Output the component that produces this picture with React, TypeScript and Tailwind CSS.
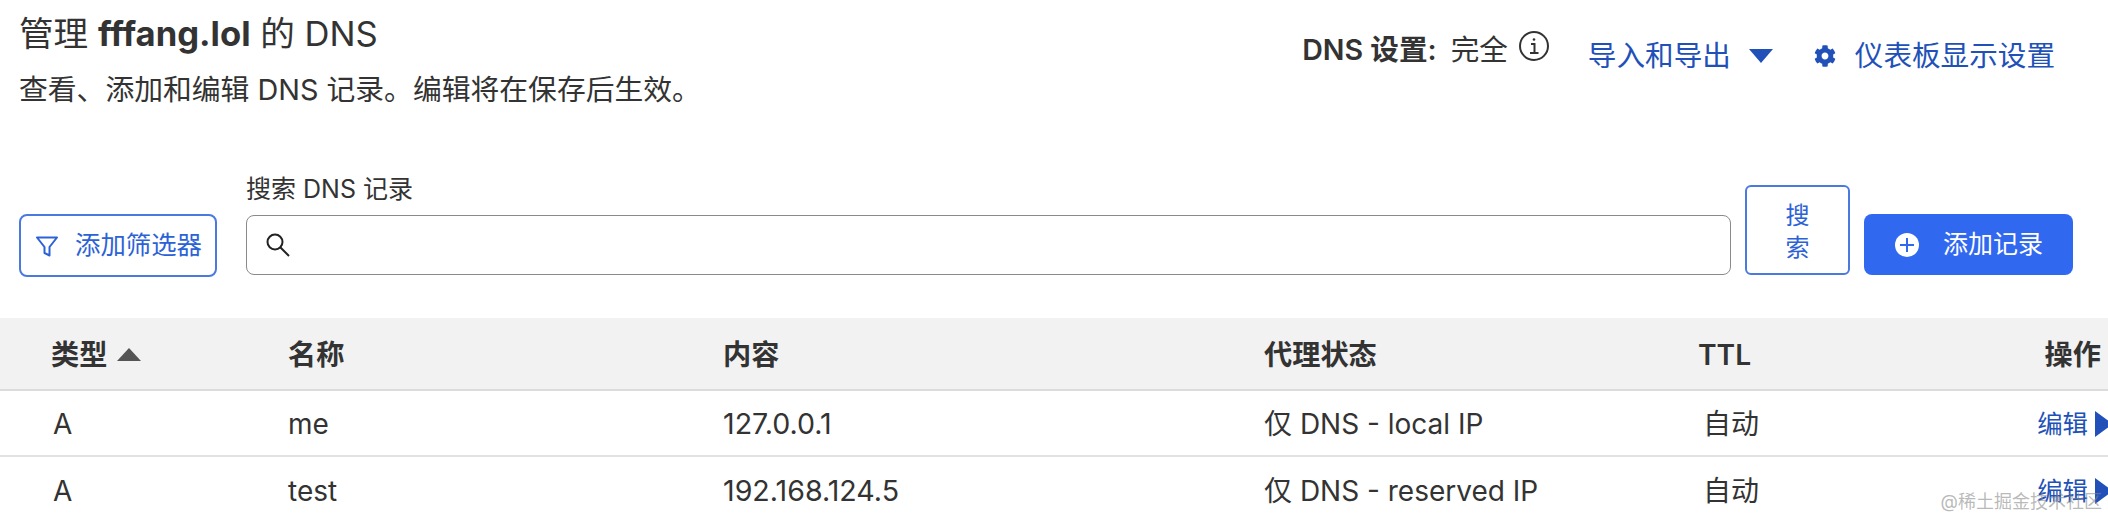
import { FaCog } from "react-icons/fa";

const font = { fontFamily: '"Inter", "Noto Sans CJK SC", sans-serif' };

function Row({ type, name, content, proxy, last }: { type: string; name: string; content: string; proxy: string; last?: boolean }) {
  return (
    <div className={`grid grid-cols-[288px_434px_542px_434px_1fr] items-center h-[66px] pt-[2px] text-[28px] text-[#333333] ${last ? "" : "border-b-2 border-[#e2e2e2]"}`}>
      <div className="pl-[53px]">{type}</div>
      <div>{name}</div>
      <div className="pl-px text-[28.6px]">{content}</div>
      <div>{proxy}</div>
      <div className="flex items-center justify-between pl-[5px]">
        <span>自动</span>
        <span className="flex items-center text-[25.4px] text-[#2151b8] -mr-[5px]">
          编辑
          <svg className="ml-[7px]" width="18" height="26" viewBox="0 0 18 26"><path d="M0 0L18 13L0 26Z" fill="#2151b8" /></svg>
        </span>
      </div>
    </div>
  );
}

export default function App() {
  return (
    <div className="relative w-[2108px] h-[520px] overflow-hidden bg-white text-[#333333]" style={font}>
      <div className="flex justify-between h-[185px] pl-[19px] pr-[53px]">
        <div className="pt-[12px]">
          <h1 className="text-[34.6px] leading-[42px] font-normal">管理 <b className="font-bold">fffang.lol</b> 的 DNS</h1>
          <p className="mt-[17px] text-[28.8px] leading-[38px]">查看、添加和编辑 DNS 记录。编辑将在保存后生效。</p>
        </div>
        <div className="flex pt-[32px] h-fit">
          <div className="flex items-start text-[28.6px] leading-[36px]">
            <b className="font-semibold">DNS 设置:</b>
            <span className="ml-[14px]">完全</span>
            <svg className="ml-[11px] -mt-[1px]" width="30" height="30" viewBox="0 0 30 30" fill="none" stroke="#333333" strokeWidth="2">
              <circle cx="15" cy="15" r="14" />
              <path d="M12 13h3.5v9M11 22h8.5" />
              <circle cx="15" cy="8.5" r="1.3" fill="#333333" stroke="none" />
            </svg>
          </div>
          <div className="ml-[39px] mt-[6px] flex items-center text-[28.6px] leading-[36px] text-[#2151b8]">
            导入和导出
            <svg className="ml-[18px]" width="24" height="14" viewBox="0 0 24 14"><path d="M0 0H24L12 14Z" fill="#2151b8" /></svg>
            <FaCog className="ml-[41px] mr-[19px] w-[22px] h-[22px]" />
            仪表板显示设置
          </div>
        </div>
      </div>

      <div className="flex items-end h-[92px] pl-[19px]">
        <button className="flex items-center w-[198px] h-[63px] rounded-[8px] border-2 border-[#4a7ae0] bg-white pl-[14px] text-[25.4px] text-[#2c62d6] whitespace-nowrap">
          <svg width="24" height="24" viewBox="0 0 24 24" fill="none" stroke="#2c62d6" strokeWidth="2" strokeLinejoin="round"><path d="M2 3.5H22L14.5 13V21.5L9.5 19V13Z" /></svg>
          <span className="ml-[16px]">添加筛选器</span>
        </button>
        <div className="ml-[29px] w-[1485px]">
          <label className="block text-[25px] leading-[32px] text-[#333333] mb-[10px]">搜索 DNS 记录</label>
          <div className="flex items-center h-[60px] mb-[2px] rounded-[8px] border-[1.5px] border-[#8a8a8a] bg-white pl-[18px]">
            <svg width="26" height="26" viewBox="0 0 26 26" fill="none" stroke="#222222" strokeWidth="2"><circle cx="10" cy="10" r="7.5" /><path d="M15.5 15.5L24 24" /></svg>
          </div>
        </div>
        <button className="ml-[14px] w-[105px] h-[90px] rounded-[6px] border-2 border-[#4a7ae0] bg-white mb-[2px] px-[38px] pt-[3px] text-[24px] leading-[32px] text-[#2c62d6]">搜索</button>
        <button className="ml-[14px] flex items-center w-[209px] h-[61px] rounded-[8px] bg-[#3168f0] mb-[2px] pl-[31px] text-[25px] text-white whitespace-nowrap">
          <svg width="24" height="24" viewBox="0 0 24 24"><circle cx="12" cy="12" r="12" fill="white" /><path d="M12 5V19M5 12H19" stroke="#3168f0" strokeWidth="2" /></svg>
          <span className="ml-[24px]">添加记录</span>
        </button>
      </div>

      <div className="mt-[41px]">
        <div className="grid grid-cols-[288px_434px_542px_434px_1fr] items-center h-[73px] pt-[3px] bg-[#f2f2f2] border-b-2 border-[#dcdcdc] text-[28.2px] font-semibold text-[#333333]">
          <div className="flex items-center pl-[51px]">
            类型
            <svg className="ml-[10px]" width="24" height="13" viewBox="0 0 24 13"><path d="M0 13H24L12 0Z" fill="#555555" /></svg>
          </div>
          <div>名称</div>
          <div className="pl-px">内容</div>
          <div>代理状态</div>
          <div className="flex items-center justify-between pr-[7px]">
            <span>TTL</span>
            <span>操作</span>
          </div>
        </div>
        <Row type="A" name="me" content="127.0.0.1" proxy="仅 DNS - local IP" />
        <Row type="A" name="test" content="192.168.124.5" proxy="仅 DNS - reserved IP" last />
      </div>

      <span className="absolute right-[6px] bottom-[7px] text-[18px] leading-[22px] text-[#8a8a8a]/60">@稀土掘金技术社区</span>
    </div>
  );
}
